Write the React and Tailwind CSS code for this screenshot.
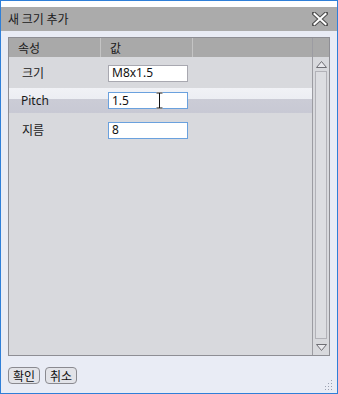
import React from "react";

const F = { fontFamily: '"Noto Sans", "Noto Sans CJK KR", sans-serif' };

function Input({ value, focused }) {
  return (
    <div
      className={`w-[80px] h-[17px] bg-white border flex items-center pl-[3px] text-[12px] leading-none text-[#111] ${
        focused ? "border-[#6aa1de]" : "border-[#a8a8b0]"
      }`}
    >
      {value}
    </div>
  );
}

export default function App() {
  return (
    <div
      className="w-[338px] h-[394px] border border-[#2f7fd8] bg-[#e9ecf5] flex flex-col relative"
      style={F}
    >
      <div className="h-[6px] bg-white" />
      <div className="h-[24px] bg-[#ababab] flex items-center justify-between pl-[7px] pr-[9px]">
        <span className="text-[12px] text-[#1a1a1a] leading-none" style={{ fontFamily: '"Noto Sans CJK KR", sans-serif' }}>
          새 크기 추가
        </span>
        <svg width="16" height="14" viewBox="0 0 16 14">
          <path d="M2 1.5 L14 12.5 M14 1.5 L2 12.5" stroke="#505050" strokeWidth="4.2" strokeLinecap="square" />
          <path d="M2.5 2 L13.5 12 M13.5 2 L2.5 12" stroke="#ffffff" strokeWidth="2" strokeLinecap="square" />
        </svg>
      </div>
      <div className="h-[6px]" />
      <div className="mx-[7px] h-[319px] border border-[#8e8e94] flex bg-[#d8d9dd]">
        <div className="flex-1 flex flex-col">
          <div className="h-[19px] bg-[#a9a9a9] flex text-[12px] leading-none text-[#1a1a1a]" style={{ fontFamily: '"Noto Sans CJK KR", sans-serif' }}>
            <div className="w-[92px] border-r border-[#c4c4c4] flex items-center pl-[9px]">속성</div>
            <div className="w-[92px] border-r border-[#c4c4c4] flex items-center pl-[9px]">값</div>
            <div className="flex-1" />
          </div>
          <div className="flex flex-col text-[12px] text-[#1a1a1a]">
            <div className="h-[31px] flex items-center pt-[1px]">
              <div className="w-[99px] pl-[13px]" style={{ fontFamily: '"Noto Sans CJK KR", sans-serif' }}>크기</div>
              <Input value="M8x1.5" />
            </div>
            <div className="h-[25px] flex items-center bg-[linear-gradient(to_bottom,#f1f2f6_0%,#eceef3_44%,#cbccd6_46%,#c8c9d4_100%)] relative">
              <div className="w-[99px] pl-[12px]">Pitch</div>
              <Input value="1.5" focused />
              <svg className="absolute left-[147px] top-[4px]" width="7" height="17" viewBox="0 0 7 17">
                <path d="M0.5 1 H6.5 M3.5 1 V16 M0.5 16 H6.5" stroke="#ffffff" strokeWidth="3" />
                <path d="M0.5 1 H6.5 M3.5 1 V16 M0.5 16 H6.5" stroke="#111" strokeWidth="1" />
              </svg>
            </div>
            <div className="h-[34px] flex items-center">
              <div className="w-[99px] pl-[13px]" style={{ fontFamily: '"Noto Sans CJK KR", sans-serif' }}>지름</div>
              <Input value="8" focused />
            </div>
          </div>
        </div>
        <div className="w-[17px] border-l border-[#9c9ca2] flex flex-col">
          <div className="h-[19px] bg-[#a9a9a9]" />
          <div className="h-[14px] flex items-center justify-center">
            <svg width="11" height="7" viewBox="0 0 11 7">
              <path d="M5.5 0.5 L10.5 6.5 L0.5 6.5 Z" fill="#e8e8ec" stroke="#6e6e74" />
            </svg>
          </div>
          <div className="flex-1 mx-[2px] border border-[#b2b2b8] bg-[#dcdde1]" />
          <div className="h-[16px] flex items-center justify-center">
            <svg width="11" height="7" viewBox="0 0 11 7">
              <path d="M0.5 0.5 L10.5 0.5 L5.5 6.5 Z" fill="#e8e8ec" stroke="#6e6e74" />
            </svg>
          </div>
        </div>
      </div>
      <div className="flex gap-[5px] pl-[7px] mt-[11px]" style={{ fontFamily: '"Noto Sans CJK KR", sans-serif' }}>
        <button className="w-[32px] h-[17px] rounded-[4px] border border-[#8a8a90] bg-[#e2e3e8] text-[12px] leading-none text-[#111] flex items-center justify-center">
          확인
        </button>
        <button className="w-[32px] h-[17px] rounded-[4px] border border-[#8a8a90] bg-[#e2e3e8] text-[12px] leading-none text-[#111] flex items-center justify-center">
          취소
        </button>
      </div>
      <svg className="absolute right-[4px] bottom-[3px]" width="10" height="10" viewBox="0 0 10 10">
        {[
          [8, 0], [8, 3], [5, 3], [8, 6], [5, 6], [2, 6], [8, 9], [5, 9], [2, 9],
        ].map(([x, y], i) => (
          <rect key={i} x={x} y={y} width="1" height="1" fill="#9aa0b0" />
        ))}
      </svg>
    </div>
  );
}
